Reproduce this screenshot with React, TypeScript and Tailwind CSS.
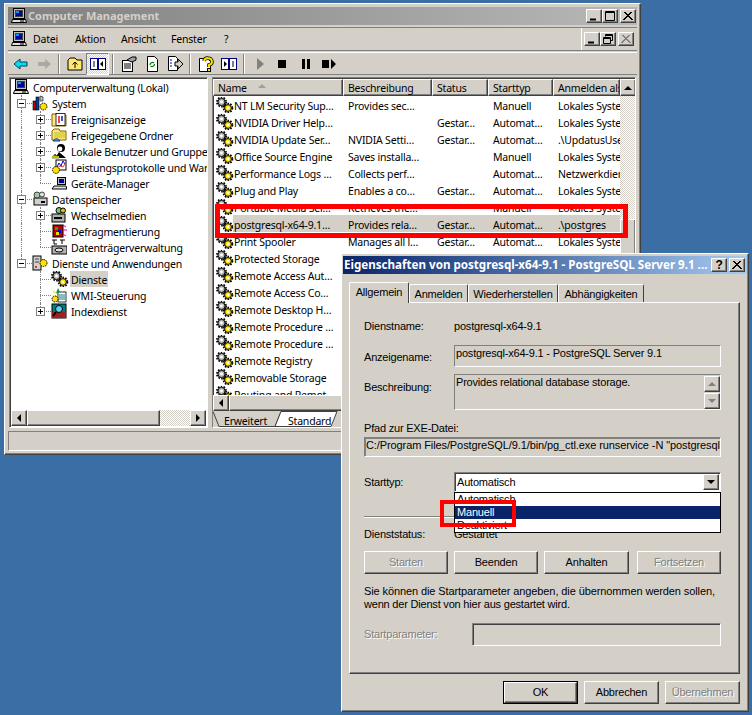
import type { ReactNode } from "react"

const raised = "border border-t-white border-l-white border-r-[#404040] border-b-[#404040] shadow-[inset_-1px_-1px_0_#808080]"
const sunken = "border border-t-[#808080] border-l-[#808080] border-r-white border-b-white"
const deep = "border border-t-[#808080] border-l-[#808080] border-r-white border-b-white shadow-[inset_1px_1px_0_#404040]"
const dither = "bg-[repeating-conic-gradient(#ffffff_0_25%,#d4d0c8_0_50%)] bg-[length:2px_2px]"
const disabled = "text-[#808080] [text-shadow:1px_1px_0_#ffffff]"

const Gear = () => (
  <svg width="18" height="16" viewBox="0 0 18 16" className="shrink-0">
    <circle cx="5.500" cy="5" r="4.600" fill="none" stroke="#000" strokeWidth="1.800" strokeDasharray="1.600 1.300" />
    <circle cx="5.500" cy="5" r="3.600" fill="#b8b8b8" stroke="#000" strokeWidth="1" />
    <circle cx="5.500" cy="5" r="1.400" fill="#fff" />
    <circle cx="12" cy="11" r="4.400" fill="none" stroke="#000" strokeWidth="1.800" strokeDasharray="1.600 1.200" />
    <circle cx="12" cy="11" r="3.400" fill="#ffe000" stroke="#000" strokeWidth="1" />
    <circle cx="12" cy="11" r="1.300" fill="#fff" />
  </svg>
)

const Pc = () => (
  <svg width="16" height="16" viewBox="0 0 16 16" className="shrink-0">
    <rect x="2.500" y="0.500" width="11" height="10" fill="#c0c0c0" stroke="#000" />
    <rect x="4.500" y="2.500" width="7" height="6" fill="#0000a0" stroke="#404040" />
    <rect x="5" y="3" width="3" height="2" fill="#00a0e0" />
    <path d="M1.500 11.500h13l1 3H.5z" fill="#e0e0e0" stroke="#000" />
    <path d="M9 13h4" stroke="#000" />
  </svg>
)

type IconName = "pc" | "system" | "event" | "folder" | "users" | "perf" | "device" | "storage" | "removable" | "defrag" | "disk" | "services" | "gear" | "wmi" | "index"

const TreeIcon = ({ name }: { name: IconName }) => {
  if (name === "pc") return <Pc />
  if (name === "gear") return <Gear />
  const body: Record<string, ReactNode> = {
    system: (<>
      <rect x="1" y="6" width="3" height="9" fill="#c00000" stroke="#000" strokeWidth=".6" />
      <rect x="4" y="2" width="3" height="13" fill="#0040a0" stroke="#000" strokeWidth=".6" />
      <path d="M8 1l3 1v4H8z" fill="#c0c0c0" stroke="#000" strokeWidth=".6" />
      <circle cx="11.500" cy="11.500" r="3.400" fill="#ffe000" stroke="#000" strokeDasharray="1.500 .8" />
    </>),
    event: (<>
      <path d="M1 3h5l1 1h8v11H1z" fill="#ffe68a" stroke="#806000" />
      <rect x="5" y="2.500" width="9" height="12" fill="#fff" stroke="#000" strokeWidth=".8" />
      <path d="M8 5v7" stroke="#e00000" strokeWidth="1.400" />
      <path d="M11 5v5" stroke="#0000c0" strokeWidth="1.400" />
    </>),
    folder: (<>
      <path d="M1 4l2-2h5l1 2h6v9H1z" fill="#ffe68a" stroke="#806000" />
      <path d="M3 6h12M3 8h12M3 10h12" stroke="#c0c000" />
      <path d="M2 14c2-3 5-3 7 0z" fill="#60a0e0" stroke="#004080" />
    </>),
    users: (<>
      <circle cx="10" cy="5" r="4" fill="#000" />
      <circle cx="9" cy="6" r="2.400" fill="#fff" />
      <path d="M4 15l4-6 7 6z" fill="#000" />
      <path d="M1 15l3-4 4 4z" fill="#e000a0" stroke="#404000" strokeWidth=".7" />
      <rect x="1" y="13" width="7" height="2" fill="#c0c000" />
    </>),
    perf: (<>
      <rect x="5" y="1" width="10" height="10" fill="#fff" stroke="#000" />
      <path d="M6 8l2-4 2 3 2-5 2 3" fill="none" stroke="#0000e0" />
      <path d="M6 9l3-2 3 1 2-3" fill="none" stroke="#e00000" strokeWidth=".8" />
      <circle cx="5" cy="11" r="3.400" fill="#ffe000" stroke="#000" strokeDasharray="1.500 .8" />
    </>),
    device: (<>
      <rect x="6.500" y="2.500" width="8" height="7" fill="#c0c0c0" stroke="#000" />
      <rect x="8" y="4" width="5" height="4" fill="#0000a0" />
      <path d="M3 11h12l1 3H1z" fill="#e0e0e0" stroke="#000" />
    </>),
    storage: (<>
      <rect x="2" y="7" width="13" height="7" fill="#d0d0d0" stroke="#000" />
      <rect x="9" y="10" width="4" height="2" fill="#000" />
      <circle cx="5" cy="4" r="3" fill="#a0c8a0" stroke="#404040" />
      <circle cx="10" cy="3.500" r="2.500" fill="#e0e0e0" stroke="#404040" />
    </>),
    removable: (<>
      <rect x="1" y="7" width="13" height="8" fill="#b0b0b0" stroke="#000" />
      <rect x="3" y="10" width="8" height="2" fill="#000" />
      <circle cx="8" cy="3.500" r="3" fill="#80c080" stroke="#000" />
      <circle cx="12" cy="3.500" r="2.500" fill="#e0c000" stroke="#000" />
    </>),
    defrag: (<>
      <rect x="2" y="2" width="10" height="12" fill="#c00000" stroke="#000" />
      <rect x="4" y="4" width="3" height="3" fill="#00c000" />
      <rect x="7" y="7" width="3" height="3" fill="#0000e0" />
      <rect x="5" y="9" width="3" height="3" fill="#e0e000" />
      <path d="M12 2l3 2M12 7h4M12 11l3 2" stroke="#e000a0" />
    </>),
    disk: (<>
      <path d="M1 1h5M9 1h5M3 1v4M11 1v4M3 5h3" stroke="#000" />
      <rect x="1" y="7" width="15" height="8" fill="#b0b0b0" stroke="#000" />
      <ellipse cx="8" cy="11" rx="4" ry="2" fill="#e0e0e0" stroke="#000" />
    </>),
    services: (<>
      <rect x="1" y="1" width="8" height="14" fill="#d0d0d0" stroke="#000" />
      <path d="M3 4h4M3 7h4" stroke="#404040" />
      <circle cx="11.500" cy="8" r="3.500" fill="#ffe000" stroke="#000" strokeDasharray="1.500 .8" />
      <circle cx="4" cy="12" r="1" fill="#e00000" />
    </>),
    wmi: (<>
      <path d="M2 4l12 8M2 12l12-8" stroke="#e0e000" />
      <rect x="7" y="5" width="8" height="10" fill="#fff" stroke="#000" strokeWidth=".8" />
      <path d="M8 8h6M8 10h6M8 12h6" stroke="#008080" />
      <circle cx="4" cy="12" r="3" fill="#ffe000" stroke="#000" strokeDasharray="1.500 .8" />
      <path d="M7 1l2 4-4 1z" fill="#00a040" />
    </>),
    index: (<>
      <rect x="1" y="1" width="14" height="14" fill="#008080" stroke="#000" />
      <path d="M1 9h14v6H1z" fill="#a02020" />
      <circle cx="8" cy="6" r="3.500" fill="#60d0f0" stroke="#000" />
      <path d="M5 9l-3 4" stroke="#000" strokeWidth="2" />
    </>),
  }
  return <svg width="16" height="16" viewBox="0 0 16 16" className="shrink-0">{body[name]}</svg>
}

const Expander = ({ open }: { open?: boolean }) => (
  <svg width="9" height="9" viewBox="0 0 9 9" className="absolute bg-white">
    <rect x=".5" y=".5" width="8" height="8" fill="#fff" stroke="#808080" />
    <path d={open ? "M2 4.500h5" : "M2 4.500h5M4.500 2v5"} stroke="#000" />
  </svg>
)

type TreeRow = { label: string; icon: IconName; level: number; exp?: "open" | "closed"; sel?: boolean; last?: boolean; through?: boolean }

const tree: TreeRow[] = [
  { label: "Computerverwaltung (Lokal)", icon: "pc", level: 0 },
  { label: "System", icon: "system", level: 1, exp: "open", through: true },
  { label: "Ereignisanzeige", icon: "event", level: 2, exp: "closed", through: true },
  { label: "Freigegebene Ordner", icon: "folder", level: 2, exp: "closed", through: true },
  { label: "Lokale Benutzer und Gruppen", icon: "users", level: 2, exp: "closed", through: true },
  { label: "Leistungsprotokolle und Warnungen", icon: "perf", level: 2, exp: "closed", through: true },
  { label: "Geräte-Manager", icon: "device", level: 2, last: true, through: true },
  { label: "Datenspeicher", icon: "storage", level: 1, exp: "open", through: true },
  { label: "Wechselmedien", icon: "removable", level: 2, exp: "closed", through: true },
  { label: "Defragmentierung", icon: "defrag", level: 2, through: true },
  { label: "Datenträgerverwaltung", icon: "disk", level: 2, last: true, through: true },
  { label: "Dienste und Anwendungen", icon: "services", level: 1, exp: "open", last: true },
  { label: "Dienste", icon: "gear", level: 2, sel: true },
  { label: "WMI-Steuerung", icon: "wmi", level: 2 },
  { label: "Indexdienst", icon: "index", level: 2, exp: "closed", last: true },
]

const dots = "absolute border-dotted border-[#808080]"

const Tree = () => (
  <div className="flex flex-col pt-px">
    {tree.map((r) => (
      <div key={r.label} className="relative h-4 flex items-center whitespace-nowrap" style={{ paddingLeft: 3 + r.level * 19 }}>
        {r.level >= 1 && (
          <span className={`${dots} left-[11px] top-0 border-l ${r.last && r.level === 1 ? "h-2" : r.level === 1 || r.through ? "h-4" : ""}`} />
        )}
        {r.level === 1 && <span className={`${dots} left-[11px] top-2 w-[11px] border-t`} />}
        {r.level === 2 && (
          <>
            <span className={`${dots} left-[30px] top-0 border-l ${r.last ? "h-2" : "h-4"}`} />
            <span className={`${dots} left-[30px] top-2 w-[11px] border-t`} />
          </>
        )}
        {r.exp && (
          <span className={`absolute top-[3.5px] ${r.level === 1 ? "left-[7px]" : "left-[26px]"} w-[9px] h-[9px]`}>
            <Expander open={r.exp === "open"} />
          </span>
        )}
        <span className="relative shrink-0 flex w-4 ml-0">
          <TreeIcon name={r.icon} />
        </span>
        <span className={`relative ml-[3px] px-[1px] h-4 leading-[18px] ${r.sel ? "bg-[#d4d0c8]" : ""}`}>{r.label}</span>
      </div>
    ))}
  </div>
)

const rows = [
  ["NT LM Security Sup…", "Provides sec…", "", "Manuell", "Lokales System"],
  ["NVIDIA Driver Help…", "", "Gestar…", "Automat…", "Lokales System"],
  ["NVIDIA Update Ser…", "NVIDIA Setti…", "Gestar…", "Automat…", ".\\UpdatusUser"],
  ["Office Source Engine", "Saves installa…", "", "Manuell", "Lokales System"],
  ["Performance Logs …", "Collects perf…", "", "Automat…", "Netzwerkdienst"],
  ["Plug and Play", "Enables a co…", "Gestar…", "Automat…", "Lokales System"],
  ["Portable Media Ser…", "Retrieves the…", "", "Manuell", "Lokales System"],
  ["postgresql-x64-9.1…", "Provides rela…", "Gestar…", "Automat…", ".\\postgres"],
  ["Print Spooler", "Manages all l…", "Gestar…", "Automat…", "Lokales System"],
  ["Protected Storage", "", "", "", ""],
  ["Remote Access Aut…", "", "", "", ""],
  ["Remote Access Co…", "", "", "", ""],
  ["Remote Desktop H…", "", "", "", ""],
  ["Remote Procedure …", "", "", "", ""],
  ["Remote Procedure …", "", "", "", ""],
  ["Remote Registry", "", "", "", ""],
  ["Removable Storage", "", "", "", ""],
  ["Routing and Remot…", "", "", "", ""],
]

const Tri = ({ dir, color = "#000" }: { dir: "up" | "down" | "left" | "right"; color?: string }) => {
  const d = { up: "M4 1l4 4H0z", down: "M0 1h8L4 5z", left: "M5 0v8L1 4z", right: "M1 0v8l4-4z" }[dir]
  const wide = dir === "up" || dir === "down"
  return (
    <svg width={wide ? 8 : 6} height={wide ? 6 : 8} viewBox={wide ? "0 0 8 6" : "0 0 6 8"}>
      <path d={d} fill={color} />
    </svg>
  )
}

const ScrollBtn = ({ dir, className = "" }: { dir: "up" | "down" | "left" | "right"; className?: string }) => (
  <div className={`${raised} bg-[#d4d0c8] flex items-center justify-center shrink-0 ${className}`}>
    <Tri dir={dir} />
  </div>
)

const WinBtn = ({ kind, off, className = "" }: { kind: "min" | "max" | "close" | "restore" | "help"; off?: boolean; className?: string }) => (
  <div className={`${raised} bg-[#d4d0c8] flex items-center justify-center shrink-0 ${className}`}>
    {kind !== "help" && (
      <svg width="10" height="10" viewBox="0 0 10 10" fill="none" stroke={off ? "#808080" : "#000"}>
        {kind === "min" && <path d="M1 8.500h6" strokeWidth="2" />}
        {kind === "max" && <path d="M.5.500h9v9h-9zM.5 1.500h9" />}
        {kind === "close" && <path d="M1 1l8 8M9 1l-8 8M2 1l8 8M8 1l-8 8" />}
        {kind === "restore" && <path d="M2.500 2.500v-2h7v6h-2M2.500 1.500h7M.5 3.500h7v6h-7zM.5 4.500h7" />}
      </svg>
    )}
    {kind === "help" && <span className="font-bold text-[12px] leading-[12px] text-black [font-family:'Liberation_Sans',sans-serif]">?</span>}
  </div>
)

const Sep = () => <span className="w-[2px] h-[20px] mx-[3px] border-l border-l-[#808080] border-r border-r-white shrink-0" />

const ToolIcon = ({ children, pressed }: { children: ReactNode; pressed?: boolean }) => (
  <span className={`w-[23px] h-[22px] flex items-center justify-center shrink-0 ${pressed ? `${sunken} ${dither}` : ""}`}>
    <svg width="16" height="16" viewBox="0 0 16 16">{children}</svg>
  </span>
)

const Toolbar = () => (
  <div className="h-[23px] mt-px flex items-center pl-[1px] border-t border-t-white border-b border-b-[#808080] bg-[#d4d0c8] shrink-0">
    <ToolIcon><path d="M1 8l6-5v3h7v4H7v3z" fill="#00e0f0" stroke="#004060" /></ToolIcon>
    <ToolIcon><path d="M15 8L9 3v3H2v4h7v3z" fill="#a8a8a8" /></ToolIcon>
    <Sep />
    <ToolIcon>
      <path d="M1 4l2-2h5l2 2h5v10H1z" fill="#ffe870" stroke="#000" />
      <path d="M8 12V6M5.500 8.500L8 6l2.500 2.500" fill="none" stroke="#000" />
    </ToolIcon>
    <ToolIcon pressed>
      <rect x=".5" y="2.500" width="15" height="11" fill="#fff" stroke="#000080" />
      <path d="M8 2v12" stroke="#000080" strokeWidth="2" />
      <path d="M3 6h2M3 8h2M3 10h2" stroke="#000" />
      <path d="M13 5v6l-3-3z" fill="#000" />
    </ToolIcon>
    <Sep />
    <ToolIcon>
      <rect x="1.500" y="4.500" width="10" height="11" fill="#fff" stroke="#000" />
      <path d="M3 8h7M3 10h7M3 12h7" stroke="#000" />
      <path d="M6 4l5-3h4v3l-4 2z" fill="#a0a0a0" stroke="#000" />
    </ToolIcon>
    <ToolIcon>
      <path d="M3.500.500h7l3 3v12h-10z" fill="#fff" stroke="#000" />
      <path d="M6 9a2.500 2.500 0 0 1 4-2M10.500 8a2.500 2.500 0 0 1-4 2" fill="none" stroke="#008000" strokeWidth="1.200" />
    </ToolIcon>
    <ToolIcon>
      <path d="M1.500.500h7l2 2v12h-9z" fill="#fff" stroke="#000" />
      <path d="M3 4h2M3 7h2M3 10h2" stroke="#0000c0" />
      <path d="M8 6h3V3l5 5-5 5v-3H8z" fill="#d4d0c8" stroke="#000" />
    </ToolIcon>
    <Sep />
    <ToolIcon>
      <path d="M1.500 2.500h8l3 3v10h-11z" fill="#fff" stroke="#000" />
      <path d="M6 5a4 3.500 0 1 1 5 4v2" fill="none" stroke="#000" strokeWidth="3.500" />
      <path d="M6 5a4 3.500 0 1 1 5 4v2" fill="none" stroke="#ffe000" strokeWidth="2" />
      <rect x="9.500" y="12.500" width="3" height="3" fill="#ffe000" stroke="#000" />
    </ToolIcon>
    <ToolIcon>
      <rect x=".5" y="2.500" width="15" height="11" fill="#fff" stroke="#000080" />
      <path d="M8 2v12" stroke="#000080" strokeWidth="2" />
      <path d="M11 6h2M11 8h2M11 10h2" stroke="#000" />
      <path d="M3 5v6l3-3z" fill="#000" />
    </ToolIcon>
    <Sep />
    <ToolIcon><path d="M5 2l7 6-7 6z" fill="#808080" /></ToolIcon>
    <ToolIcon><rect x="3" y="4" width="8" height="8" fill="#000" /></ToolIcon>
    <ToolIcon><path d="M4 3h3v10H4zM9 3h3v10H9z" fill="#000" /></ToolIcon>
    <ToolIcon><path d="M1 4h7v8H1zM10 3l5 5-5 5z" fill="#000" /></ToolIcon>
  </div>
)

const cols = [
  { label: "Name", w: "w-[130px]" },
  { label: "Beschreibung", w: "w-[89px]" },
  { label: "Status", w: "w-[56px]" },
  { label: "Starttyp", w: "w-[65px]" },
  { label: "Anmelden als", w: "w-[67px]" },
]

const ServiceList = () => (
  <div className={`${deep} w-[424px] h-[351px] bg-white flex flex-col relative overflow-hidden`}>
    <div className="flex h-[17px] mt-px shrink-0">
      {cols.map((c, i) => (
        <div key={c.label} className={`${raised} ${c.w} bg-[#d4d0c8] pl-[4px] leading-[16px] overflow-hidden whitespace-nowrap relative shrink-0`}>
          {c.label}
          {i === 0 && <span className="absolute left-[44px] top-[3px] flex"><Tri dir="up" color="#a0a0a0" /></span>}
        </div>
      ))}
      <ScrollBtn dir="up" className="w-4" />
    </div>
    <div className="flex h-[300px] overflow-hidden">
      <div className="w-[407px] overflow-hidden shrink-0">
        {rows.map((r, i) => (
          <div key={i} className="flex h-[17px] items-center whitespace-nowrap">
            <span className="w-[20px] pl-[3px] shrink-0 flex"><Gear /></span>
            <div className={`flex h-[17px] leading-[21px] ${r[0].startsWith("postgres") ? "bg-[#d4d0c8]" : ""}`}>
              <span className="w-[111px] pl-px overflow-hidden shrink-0">{r[0]}</span>
              <span className="w-[89px] pl-[4px] overflow-hidden shrink-0">{r[1]}</span>
              <span className="w-[56px] pl-[4px] overflow-hidden shrink-0">{r[2]}</span>
              <span className="w-[65px] pl-[4px] overflow-hidden shrink-0">{r[3]}</span>
              <span className="w-[66px] pl-[4px] overflow-hidden shrink-0">{r[4]}</span>
            </div>
          </div>
        ))}
      </div>
      <div className="w-4 flex flex-col shrink-0">
        <div className={`${dither} h-[123px] shrink-0`} />
        <div className={`${raised} bg-[#d4d0c8] flex-1`} />
      </div>
    </div>
    <div className="flex h-4 shrink-0 bg-[#d4d0c8]">
      <ScrollBtn dir="left" className="w-4" />
      <div className={`${raised} bg-[#d4d0c8] flex-1`} />
    </div>
    <div className="relative h-[16px] flex items-center bg-[#d4d0c8]">
      <svg width="135" height="16" viewBox="0 0 135 16" className="absolute left-0 top-0">
        <path d="M0 .5l6 15h56l6-15" fill="#d4d0c8" stroke="#404040" />
        <path d="M68 .5L62 15.500h56l6-15z" fill="#fff" stroke="#404040" />
      </svg>
      <span className="relative ml-[11px] mt-[5px] w-[64px]">Erweitert</span>
      <span className="relative mt-[5px]">Standard</span>
    </div>
  </div>
)

const TreePane = () => (
  <div className={`${deep} w-[199px] h-[351px] bg-white flex flex-col overflow-hidden`}>
    <div className="flex-1 overflow-hidden"><Tree /></div>
    <div className="flex h-4 mx-[1px] mb-[1px] shrink-0 bg-[#d4d0c8]">
      <ScrollBtn dir="left" className="w-4" />
      <div className={`${raised} bg-[#d4d0c8] w-[133px]`} />
      <div className={`${dither} flex-1`} />
      <ScrollBtn dir="right" className="w-4" />
    </div>
  </div>
)

const MainWindow = () => (
  <div className={`${raised} absolute left-[4px] top-[3px] w-[637px] h-[452px] bg-[#d4d0c8] p-[3px] flex flex-col [font-family:'Noto_Sans',sans-serif] text-[10.5px] tracking-[-0.2px] text-black`}>
    <div className="h-[18px] flex items-center bg-gradient-to-r from-[#808080] to-[#b8b8b8] pl-[3px] pr-[1px] shrink-0">
      <Pc />
      <span className="ml-[1px] font-bold text-[#d4d0c8] text-[11px] tracking-normal">Computer Management</span>
      <div className="ml-auto flex">
        <WinBtn kind="min" className="w-[16px] h-[14px]" />
        <WinBtn kind="max" className="w-[16px] h-[14px]" />
        <WinBtn kind="close" className="w-[16px] h-[14px] ml-[2px]" />
      </div>
    </div>
    <div className="mt-[2px] h-[24px] flex items-center border-t border-t-[#808080] border-b border-b-[#808080] shrink-0 pl-[3px] pr-[3px] bg-[#d4d0c8]">
      <Pc />
      <span className="ml-[6px] mt-px w-[42px]">Datei</span>
      <span className="mt-px w-[46px]">Aktion</span>
      <span className="mt-px w-[50px]">Ansicht</span>
      <span className="mt-px w-[53px]">Fenster</span>
      <span className="mt-px">?</span>
      <div className="ml-auto flex border-l border-l-white pl-[2px] h-[22px] items-center">
        <WinBtn kind="min" className="w-[16px] h-[14px]" />
        <WinBtn kind="restore" className="w-[16px] h-[14px]" />
        <WinBtn kind="close" off className="w-[16px] h-[14px] ml-[2px]" />
      </div>
    </div>
    <Toolbar />
    <div className="mt-[2px] flex px-[1px] gap-[4px] shrink-0">
      <TreePane />
      <ServiceList />
    </div>
    <div className={`${sunken} mt-[3px] flex-1`} />
  </div>
)

const DlgButton = ({ label, off, def, className = "" }: { label: string; off?: boolean; def?: boolean; className?: string }) => (
  <div className={`${def ? "border border-black" : ""} flex ${className}`}>
    <div className={`${raised} flex-1 flex items-center justify-center ${off ? disabled : ""}`}>{label}</div>
  </div>
)

const tabs = [
  { label: "Anmelden", w: "w-[59px]" },
  { label: "Wiederherstellen", w: "w-[90px]" },
  { label: "Abhängigkeiten", w: "w-[86px]" },
]

const Dialog = () => (
  <div className={`${raised} absolute left-[341px] top-[253px] w-[408px] h-[459px] bg-[#d4d0c8] pt-[2px] px-[1px] flex flex-col [font-family:'Liberation_Sans',sans-serif] text-[11px] tracking-[-0.2px] text-black`}>
    <div className="h-[18px] flex items-center bg-gradient-to-r from-[#0a246a] to-[#a6caf0] pl-[1px] pr-[2px] shrink-0">
      <span className="font-bold text-white text-[11.6px] tracking-normal whitespace-nowrap [font-family:'Noto_Sans',sans-serif]">Eigenschaften von postgresql-x64-9.1 - PostgreSQL Server 9.1 ...</span>
      <div className="ml-auto flex gap-[2px]">
        <WinBtn kind="help" className="w-[16px] h-[14px]" />
        <WinBtn kind="close" className="w-[16px] h-[14px]" />
      </div>
    </div>
    <div className="flex mt-[8px] ml-[6px] h-[20px] items-end relative z-10 shrink-0">
      <div className="w-[60px] h-[21px] bg-[#d4d0c8] border-t border-t-white border-l border-l-white border-r border-r-[#404040] rounded-t-[2px] text-center leading-[19px] -mb-[1px]">Allgemein</div>
      {tabs.map((t) => (
        <div key={t.label} className={`${t.w} h-[18px] border-t border-t-white border-l border-l-white border-r border-r-[#404040] rounded-t-[2px] text-center leading-[18px] whitespace-nowrap`}>{t.label}</div>
      ))}
    </div>
    <div className={`${raised} ml-[6px] w-[391px] h-[372px] flex flex-col pl-[14px] pr-[18px] shrink-0`}>
      <div className="flex h-[14px] mt-[16px] items-center">
        <span className="w-[90px]">Dienstname:</span>
        <span>postgresql-x64-9.1</span>
      </div>
      <div className="flex mt-[12px] items-center">
        <span className="w-[90px] mt-[2px]">Anzeigename:</span>
        <div className={`${sunken} flex-1 h-[22px] pl-[1px] leading-[13px] pt-[1px]`}>postgresql-x64-9.1 - PostgreSQL Server 9.1</div>
      </div>
      <div className="flex mt-[7px]">
        <span className="w-[90px] mt-[5px]">Beschreibung:</span>
        <div className={`${sunken} flex-1 h-[36px] pl-[1px] pt-[1px] leading-[13px] flex justify-between`}>
          <span>Provides relational database storage.</span>
          <div className="flex flex-col">
            <div className={`${raised} w-[16px] h-[16px] flex items-center justify-center`}><Tri dir="up" color="#808080" /></div>
            <div className={`${raised} w-[16px] h-[16px] flex items-center justify-center mt-[1px]`}><Tri dir="down" color="#808080" /></div>
          </div>
        </div>
      </div>
      <div className="h-[14px] mt-[11px] leading-[14px]">Pfad zur EXE-Datei:</div>
      <div className={`${sunken} bg-[#d4d0c8] h-[20px] mt-[2px] pl-[1px] whitespace-nowrap overflow-hidden leading-[14px] tracking-[-0.1px] shadow-[inset_1px_1px_0_#808080]`}>C:/Program Files/PostgreSQL/9.1/bin/pg_ctl.exe runservice -N "postgresql-x64-9.1"</div>
      <div className="flex mt-[15px] items-center relative">
        <span className="w-[90px]">Starttyp:</span>
        <div className={`${deep} flex-1 h-[20px] bg-white flex items-center pl-[2px] justify-between`}>
          <span>Automatisch</span>
          <ScrollBtn dir="down" className="w-[16px] h-[16px] mr-px" />
        </div>
        <div className="absolute left-[90px] right-0 top-[20px] h-[41px] bg-white border border-black z-10 flex flex-col leading-[13px]">
          <span className="h-[13px] pl-[2px]">Automatisch</span>
          <span className="h-[13px] pl-[2px] bg-[#0a246a] text-white">Manuell</span>
          <span className="h-[13px] pl-[2px]">Deaktiviert</span>
        </div>
      </div>
      <div className="h-[2px] mt-[24px] border-t border-t-[#808080] border-b border-b-white" />
      <div className="flex h-[14px] mt-[9px] items-center">
        <span className="w-[90px]">Dienststatus:</span>
        <span>Gestartet</span>
      </div>
      <div className="flex mt-[10px] gap-[6px]">
        <DlgButton label="Starten" off className="w-[84px] h-[23px]" />
        <DlgButton label="Beenden" className="w-[84px] h-[23px]" />
        <DlgButton label="Anhalten" className="w-[85px] h-[23px]" />
        <DlgButton label="Fortsetzen" off className="w-[84px] h-[23px] ml-[2px]" />
      </div>
      <p className="mt-[11px] leading-[13px] whitespace-nowrap"><span className="tracking-[-0.1px]">Sie können die Startparameter angeben, die übernommen werden sollen,</span><br />wenn der Dienst von hier aus gestartet wird.</p>
      <div className="flex mt-[12px] items-center">
        <span className={`w-[108px] ${disabled}`}>Startparameter:</span>
        <div className={`${deep} flex-1 h-[23px]`} />
      </div>
    </div>
    <div className="flex justify-end gap-[6px] mt-[7px] mr-[7px]">
      <DlgButton label="OK" def className="w-[75px] h-[23px]" />
      <DlgButton label="Abbrechen" className="w-[75px] h-[23px]" />
      <DlgButton label="Übernehmen" off className="w-[75px] h-[23px]" />
    </div>
  </div>
)

export default function App() {
  return (
    <div className="relative w-[752px] h-[715px] bg-[#3a6ea5] overflow-hidden">
      <MainWindow />
      <Dialog />
      {/* red markers drawn on top of the screenshot */}
      <div className="absolute left-[215px] top-[204px] w-[413px] h-[34px] border-[5px] border-[#ff0000] z-20" />
      <div className="absolute left-[440px] top-[500px] w-[76px] h-[27px] border-[4px] border-[#ff0000] z-20" />
    </div>
  )
}
